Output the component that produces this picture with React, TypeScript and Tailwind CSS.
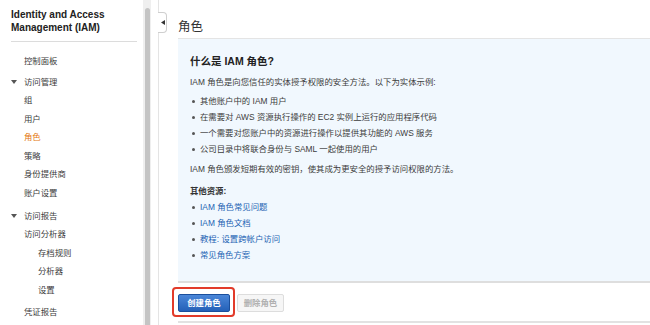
import React from "react";

const FONT = '"Liberation Sans", "Noto Sans CJK SC", sans-serif';

function Caret() {
  return (
    <svg width="6" height="4" viewBox="0 0 6 4" className="absolute left-[-13px] top-[7.5px]">
      <path d="M0 0 L6 0 L3 4 Z" fill="#555" />
    </svg>
  );
}

function NavItem({
  children,
  indent = 0,
  mt = 0,
  active = false,
  caret = false,
}: {
  children: React.ReactNode;
  indent?: number;
  mt?: number;
  active?: boolean;
  caret?: boolean;
}) {
  return (
    <div
      className={`relative leading-[18.5px] h-[18.5px] ${active ? "text-[#e47911]" : "text-[#3c3c3c]"}`}
      style={{ marginLeft: indent, marginTop: mt }}
    >
      {caret && <Caret />}
      {children}
    </div>
  );
}

export default function App() {
  return (
    <div
      className="flex w-[650px] h-[325px] overflow-hidden bg-white"
      style={{ fontFamily: FONT }}
    >
      {/* Sidebar */}
      <div className="w-[143px] shrink-0 pl-[11px] pr-[6px]">
        <div className="pt-[8px] text-[10px] leading-[13px] font-bold text-[#222]">
          Identity and Access
          <br />
          Management (IAM)
        </div>
        <div className="mt-[7px] h-px w-[126px] bg-[#dcdcdc]" />
        <div className="pl-[13px] text-[8.4px]">
          <NavItem mt={9.75}>控制面板</NavItem>
          <NavItem mt={2.5} caret>访问管理</NavItem>
          <NavItem>组</NavItem>
          <NavItem>用户</NavItem>
          <NavItem active>角色</NavItem>
          <NavItem>策略</NavItem>
          <NavItem>身份提供商</NavItem>
          <NavItem>账户设置</NavItem>
          <NavItem mt={4.5} caret>访问报告</NavItem>
          <NavItem>访问分析器</NavItem>
          <NavItem indent={14}>存档规则</NavItem>
          <NavItem indent={14}>分析器</NavItem>
          <NavItem indent={14}>设置</NavItem>
          <NavItem mt={3.5}>凭证报告</NavItem>
        </div>
      </div>

      {/* Scrollbar */}
      <div className="w-[8px] shrink-0 bg-[#efefef] pt-[8px] flex justify-center">
        <div className="w-[5px] h-full rounded-t-full bg-[#c4c4c4]" />
      </div>
      <div className="w-[7px] shrink-0" />

      {/* Main */}
      <div className="relative flex-1 min-w-0 border-l border-[#e4e4e4] pl-[19px]">
        <div className="absolute left-[-1px] top-[12px] w-[9px] h-[21px] border border-l-0 border-[#cfcfcf] rounded-r-[4px] bg-white flex items-center justify-center">
          <svg width="4" height="5" viewBox="0 0 4 5" className="ml-[1px]">
            <path d="M4 0 L4 5 L0 2.5 Z" fill="#333" />
          </svg>
        </div>

        <div className="pt-[20px] leading-[15px] text-[12.5px] text-[#333] mb-[3px]">角色</div>

        <div className="border-t border-[#e4e4e4] border-b-2 border-b-[#dedede] bg-[#f1f8fe] pl-[12px] pt-[15px] pb-[18px] text-[8.4px] text-[#3c3c3c]">
          <div className="text-[10.5px] leading-[14px] font-bold text-[#222]">什么是 IAM 角色?</div>
          <div className="mt-[6.5px] leading-[14px]">
            IAM 角色是向您信任的实体授予权限的安全方法。以下为实体示例:
          </div>
          <ul className="mt-[4.5px]">
            {[
              "其他账户中的 IAM 用户",
              "在需要对 AWS 资源执行操作的 EC2 实例上运行的应用程序代码",
              "一个需要对您账户中的资源进行操作以提供其功能的 AWS 服务",
              "公司目录中将联合身份与 SAML 一起使用的用户",
            ].map((t) => (
              <li key={t} className="relative pl-[10px] leading-[16px]">
                <span className="absolute left-[2px] top-[7px] w-[2.5px] h-[2.5px] rounded-full bg-[#555]" />
                {t}
              </li>
            ))}
          </ul>
          <div className="mt-[5px] leading-[14px]">
            IAM 角色颁发短期有效的密钥，使其成为更安全的授予访问权限的方法。
          </div>
          <div className="mt-[8px] leading-[14px] font-bold text-[#333]">其他资源:</div>
          <ul className="mt-[1px]">
            {["IAM 角色常见问题", "IAM 角色文档", "教程: 设置跨帐户访问", "常见角色方案"].map((t) => (
              <li key={t} className="relative pl-[10px] leading-[16px] text-[#1d63b3]">
                <span className="absolute left-[2px] top-[7px] w-[2.5px] h-[2.5px] rounded-full bg-[#555]" />
                {t}
              </li>
            ))}
          </ul>
        </div>

        <div className="flex items-start ml-[-6px] mt-[4px]">
          <div className="border-2 border-[#e23b2a] rounded-[4px] pl-[4px] pr-[3px] pt-[5px] pb-[3px]">
            <div className="w-[52px] h-[18px] rounded-[2px] border border-[#1b4f9c] bg-gradient-to-b from-[#4a86d8] to-[#2461b8] text-white text-[8.4px] font-bold flex items-center justify-center">
              创建角色
            </div>
          </div>
          <div className="ml-[2px] mt-[7px] w-[47px] h-[18px] rounded-[2px] border border-[#dddddd] bg-[#f6f6f6] text-[#b0b0b0] text-[8.4px] font-bold flex items-center justify-center">
            删除角色
          </div>
        </div>
        <div className="mt-[4px] border-t-2 border-[#e2e2e2]" />
      </div>
    </div>
  );
}
